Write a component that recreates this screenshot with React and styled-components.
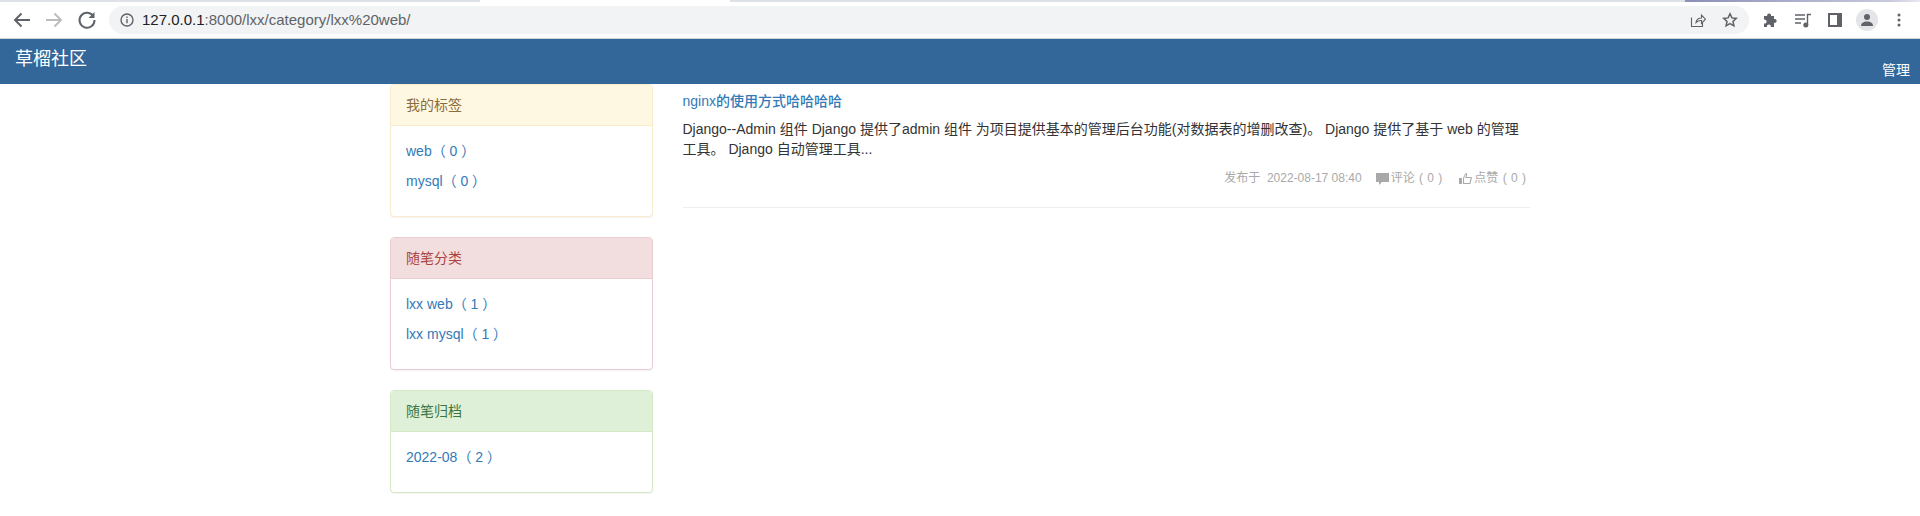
import React from "react";
import styled, { createGlobalStyle } from "styled-components";

const FONT = '"Liberation Sans", "Noto Sans CJK SC", sans-serif';

const GlobalStyle = createGlobalStyle`
  html, body {
    margin: 0;
    padding: 0;
    background: #fff;
  }
  * {
    box-sizing: border-box;
  }
  body {
    font-family: ${FONT};
    font-size: 14px;
    line-height: 20px;
    color: #333;
  }
`;

const TabStrip = styled.div`
  height: 2px;
  background: linear-gradient(
    to right,
    #dee1e6 0,
    #dee1e6 480px,
    #fff 480px,
    #fff 730px,
    #dee1e6 730px,
    #dee1e6 1685px,
    #8a8fb5 1685px,
    #c9c9de 1890px,
    #e8e8f0 1920px
  );
`;

const Chrome = styled.div`
  height: 37px;
  display: flex;
  align-items: center;
  background: #fff;
  border-bottom: 1px solid #d0d2d6;
  padding: 0 0 0 10px;
`;

const NavIcon = styled.svg`
  width: 24px;
  height: 24px;
  flex: none;
  margin-right: ${(p) => p.$gap || 0}px;
  fill: none;
  stroke: ${(p) => p.$color || "#5f6368"};
  stroke-width: 2;
`;

const AddressBar = styled.div`
  width: 1640px;
  margin-left: 10px;
  height: 28px;
  flex: none;
  border-radius: 14px;
  background: #f1f3f4;
  display: flex;
  align-items: center;
  padding: 0 11px 0 11px;
  font-size: 15px;
  color: #5f6368;
`;

const Host = styled.span`
  color: #202124;
  margin-left: 8px;
`;

const Spacer = styled.div`
  flex: 1;
`;

const Tools = styled.div`
  display: flex;
  align-items: center;
  margin-left: 6px;
`;

const ToolSlot = styled.div`
  width: 32px;
  height: 24px;
  display: flex;
  align-items: center;
  justify-content: center;
`;

const Avatar = styled.div`
  width: 22px;
  height: 22px;
  border-radius: 50%;
  background: #e3e5e9;
  display: flex;
  align-items: center;
  justify-content: center;
`;

const Navbar = styled.nav`
  height: 45px;
  background: #336699;
  color: #fff;
  display: flex;
  justify-content: space-between;
  padding: 0 15px;
`;

const Brand = styled.a`
  font-size: 18px;
  line-height: 20px;
  margin-top: 10px;
`;

const NavLink = styled.a`
  font-size: 14px;
  line-height: 20px;
  margin-top: 21px;
  margin-right: -5px;
`;

const Container = styled.div`
  width: 1170px;
  margin: 0 auto;
  display: flex;
`;

const Sidebar = styled.aside`
  width: 292.5px;
  padding: 0 15px;
  flex: none;
`;

const Main = styled.main`
  width: 877.5px;
  padding: 0 15px;
  flex: none;
`;

const tones = {
  warning: { text: "#8a6d3b", bg: "#fef7e2", border: "#faebcc" },
  danger: { text: "#a94442", bg: "#f2dede", border: "#ebccd1" },
  success: { text: "#3c763d", bg: "#dff0d8", border: "#d6e9c6" },
};

const Panel = styled.section`
  background: #fff;
  border: 1px solid ${(p) => tones[p.$tone].border};
  border-radius: 4px;
  margin-bottom: 20px;
  box-shadow: 0 1px 1px rgba(0, 0, 0, 0.05);
  overflow: hidden;
`;

const PanelHeading = styled.div`
  padding: 10px 15px;
  height: 41px;
  color: ${(p) => tones[p.$tone].text};
  background: ${(p) => tones[p.$tone].bg};
  border-bottom: 1px solid ${(p) => tones[p.$tone].border};
`;

const PanelBody = styled.div`
  padding: 15px;
`;

const PanelRow = styled.p`
  margin: 0 0 10px;
`;

const Link = styled.a`
  color: #337ab7;
  text-decoration: none;
`;

const PostTitle = styled.h5`
  margin: 10px 0 10px;
  font-size: 14px;
  font-weight: 500;
  line-height: 15.4px;
`;

const PostSummary = styled.p`
  margin: 0 0 9px;
  line-height: 20px;
`;

const PostMeta = styled.div`
  display: flex;
  justify-content: flex-end;
  align-items: center;
  padding-right: 4px;
  font-size: 12px;
  line-height: 20px;
  color: #a9a9a9;
`;

const MetaItem = styled.span`
  display: inline-flex;
  align-items: center;
  margin-left: ${(p) => p.$gap || 0}px;
  white-space: pre;
`;

const MetaCount = styled(MetaItem)`
  word-spacing: 1px;
`;

const MetaIcon = styled.svg`
  width: 13px;
  height: 13px;
  margin-right: 2px;
  fill: #a9a9a9;
`;

const Divider = styled.hr`
  margin: 19px 0 0;
  border: 0;
  border-top: 1px solid #eee;
`;

const sections = [
  {
    tone: "warning",
    title: "我的标签",
    rows: ["web（ 0 ）", "mysql（ 0 ）"],
  },
  {
    tone: "danger",
    title: "随笔分类",
    rows: ["lxx web（ 1 ）", "lxx mysql（ 1 ）"],
  },
  { tone: "success", title: "随笔归档", rows: ["2022-08（ 2 ）"] },
];

export default function App() {
  return (
    <>
      <GlobalStyle />
      <TabStrip />
      <Chrome>
        <NavIcon viewBox="0 0 24 24" $gap={8}>
          <path d="M20 12H5M11.5 5.5 5 12l6.5 6.5" />
        </NavIcon>
        <NavIcon viewBox="0 0 24 24" $color="#babcbe" $gap={9}>
          <path d="M4 12h15M12.5 5.5 19 12l-6.5 6.5" />
        </NavIcon>
        <NavIcon viewBox="0 0 24 24">
          <path d="M18.5 8.5A7.5 7.5 0 1 0 19.5 12" />
          <path d="M19.5 4v6h-6z" fill="#5f6368" stroke="none" />
        </NavIcon>
        <AddressBar>
          <svg width="14" height="14" viewBox="0 0 14 14" fill="none" stroke="#5f6368" strokeWidth="1.4">
            <circle cx="7" cy="7" r="6" />
            <path d="M7 6v4.2M7 3.6v1.4" />
          </svg>
          <Host>127.0.0.1</Host>
          :8000/lxx/category/lxx%20web/
          <Spacer />
          <svg width="16" height="16" viewBox="0 0 16 16" fill="none" stroke="#5f6368" strokeWidth="1.1">
            <path d="M1.5 5.5v9h11V11M6 10.5c.5-3 3-4.500 5.500-4.500V3l4 4.200-4 4.200V8.600C9.500 8.400 7.500 9 6 10.500z" />
          </svg>
          <svg width="16" height="16" viewBox="0 0 16 16" fill="none" stroke="#5f6368" strokeWidth="1.5" style={{ marginLeft: 16 }}>
            <path d="m8 1.800 1.900 4.100 4.400.5-3.300 3 .9 4.400L8 11.600l-3.900 2.200.9-4.400-3.300-3 4.400-.5z" />
          </svg>
        </AddressBar>
        <Tools>
          <ToolSlot>
            <svg width="16" height="16" viewBox="0 0 16 16" fill="#5f6368">
              <path d="M1 4h3.200a2 2 0 1 1 3.800 0h3v3a2 2 0 1 1 0 3.800V15H7.800a2 2 0 1 0-3.800 0H1v-3.500a2 2 0 1 0 0-3.800z" />
            </svg>
          </ToolSlot>
          <ToolSlot>
            <svg width="17" height="16" viewBox="0 0 17 16" fill="none" stroke="#5f6368" strokeWidth="1.4">
              <path d="M0 3h10M0 7h10M0 11h6" />
              <path d="M12.500 13V2.500H16" />
              <circle cx="10.800" cy="13" r="1.800" fill="#5f6368" />
            </svg>
          </ToolSlot>
          <ToolSlot>
            <svg width="14" height="14" viewBox="0 0 14 14">
              <path d="M0 0h14v14H0zM2 2v10h7V2z" fill="#5f6368" fillRule="evenodd" />
            </svg>
          </ToolSlot>
          <ToolSlot>
            <Avatar>
              <svg width="14" height="14" viewBox="0 0 14 14" fill="#5f6368">
                <circle cx="7" cy="4" r="3" />
                <path d="M1 13c0-3 2.500-4.500 6-4.500s6 1.500 6 4.500z" />
              </svg>
            </Avatar>
          </ToolSlot>
          <ToolSlot>
            <svg width="4" height="14" viewBox="0 0 4 14" fill="#5f6368">
              <circle cx="2" cy="2" r="1.500" />
              <circle cx="2" cy="7" r="1.500" />
              <circle cx="2" cy="12" r="1.500" />
            </svg>
          </ToolSlot>
        </Tools>
      </Chrome>
      <Navbar>
        <Brand>草榴社区</Brand>
        <NavLink>管理</NavLink>
      </Navbar>
      <Container>
        <Sidebar>
          {sections.map((s) => (
            <Panel key={s.title} $tone={s.tone}>
              <PanelHeading $tone={s.tone}>{s.title}</PanelHeading>
              <PanelBody>
                {s.rows.map((r) => (
                  <PanelRow key={r}>
                    <Link>{r}</Link>
                  </PanelRow>
                ))}
              </PanelBody>
            </Panel>
          ))}
        </Sidebar>
        <Main>
          <PostTitle>
            <Link>nginx的使用方式哈哈哈哈</Link>
          </PostTitle>
          <PostSummary>
            Django--Admin 组件 Django 提供了admin 组件 为项目提供基本的管理后台功能(对数据表的增删改查)。 Django 提供了基于 web 的管理工具。 Django 自动管理工具...
          </PostSummary>
          <PostMeta>
            <MetaItem>发布于&nbsp; 2022-08-17 08:40</MetaItem>
            <MetaCount $gap={14}>
              <MetaIcon viewBox="0 0 13 13">
                <path d="M0 1h13v9H6l-3 3v-3H0z" />
              </MetaIcon>
              评论 ( 0 )
            </MetaCount>
            <MetaCount $gap={17}>
              <MetaIcon viewBox="0 0 13 13">
                <path d="M0 6h3v6H0zM4 6l2.500-5c1.500 0 2 1 1.500 2.500L7.500 5H12c1 0 1 1 .8 1.500l-1.300 5c-.2.500-.5.500-1 .500H4zM5 6.300V11h5.500l1.200-5H6.200l.9-2.800c0-.5 0-.8-.3-.9z" fillRule="evenodd" />
              </MetaIcon>
              点赞 ( 0 )
            </MetaCount>
          </PostMeta>
          <Divider />
        </Main>
      </Container>
    </>
  );
}
